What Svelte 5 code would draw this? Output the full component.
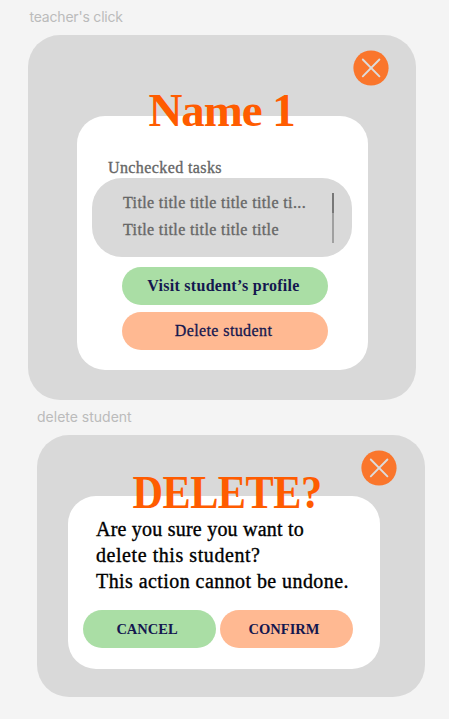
<script>
  const tasks = [
    'Title title title title title ti...',
    'Title title title title title'
  ];
</script>

{#snippet closeButton()}
  <button class="close" aria-label="Close">
    <svg viewBox="0 0 36 36" width="36" height="36">
      <circle cx="18" cy="18" r="17.6" fill="#fa762c" />
      <path d="M9.8 9.5 26.4 26.3M26.4 9.5 9.8 26.3" stroke="#dcdcdc" stroke-width="1.9" stroke-linecap="round" />
    </svg>
  </button>
{/snippet}

<main>
  <div class="label first">teacher's click</div>
  <section class="card profile">
    {@render closeButton()}
    <h1>Name 1</h1>
    <div class="panel">
      <div class="caption">Unchecked tasks</div>
      <div class="tasks">
        <div class="list">
          {#each tasks as task}
            <div class="task">{task}</div>
          {/each}
        </div>
        <div class="track"><div class="thumb"></div></div>
      </div>
      <div class="stack">
        <button class="pill green visit">Visit student’s profile</button>
        <button class="pill peach remove">Delete student</button>
      </div>
    </div>
  </section>

  <div class="label second">delete student</div>
  <section class="card confirm">
    {@render closeButton()}
    <h1>DELETE?</h1>
    <div class="panel">
      <div class="message">
        <div class="l1">Are you sure you want to</div>
        <div class="l2">delete this student?</div>
        <div class="l3">This action cannot be undone.</div>
      </div>
      <div class="row">
        <button class="pill green caps">CANCEL</button>
        <button class="pill peach caps">CONFIRM</button>
      </div>
    </div>
  </section>
</main>

<style>
  :global(body) { background: #f4f4f4; }
  main {
    box-sizing: border-box;
    width: 449px;
    height: 719px;
    overflow: hidden;
    background: #f4f4f4;
    font-family: "Liberation Serif", serif;
    white-space: nowrap;
  }
  .label {
    box-sizing: border-box;
    font: 14px/20px Inter, sans-serif;
    color: #bbb;
  }
  .first { height: 35.4px; padding: 7px 0 0 29.5px; letter-spacing: -0.2px; }
  .second { height: 35px; padding: 7px 0 0 37px; }
  .card {
    position: relative;
    box-sizing: border-box;
    width: 388px;
    background: #d9d9d9;
    border-radius: 32px;
  }
  .profile { margin-left: 28px; height: 365px; padding: 81px 48px 0 49px; }
  .confirm { margin-left: 37px; height: 261.5px; padding: 61px 45px 0 31px; }
  .close {
    position: absolute;
    top: 14.5px;
    right: 27.5px;
    width: 36px;
    height: 36px;
    padding: 0;
    border: 0;
    background: none;
  }
  .confirm .close { right: 28.4px; }
  .close svg { display: block; fill: none; }
  h1 {
    position: absolute;
    left: 0;
    width: 100%;
    margin: 0;
    text-align: center;
    font-size: 47px;
    line-height: 54px;
    color: #ff5c00;
  }
  .profile h1 { top: 48px; left: -0.5px; letter-spacing: -1.1px; }
  .confirm h1 { top: 30px; left: -4px; letter-spacing: -0.6px; transform: scaleX(0.9); }
  .panel { background: #fff; border-radius: 28px; box-sizing: border-box; }
  .profile .panel { height: 253.5px; padding: 42px 16px 0 15px; }
  .confirm .panel { height: 173px; padding: 19.5px 15px 0; }
  .caption {
    height: 20px;
    padding-left: 16px;
    font-size: 16px;
    line-height: 20px;
    letter-spacing: 0.4px;
    color: #666;
    -webkit-text-stroke: 0.35px #666;
  }
  .tasks {
    display: flex;
    justify-content: space-between;
    box-sizing: border-box;
    height: 78.5px;
    padding: 10.5px 18px 0 31px;
    background: #d9d9d9;
    border-radius: 30px;
  }
  .task {
    height: 27px;
    font-size: 16px;
    line-height: 27px;
    letter-spacing: 0.37px;
    color: #666;
    -webkit-text-stroke: 0.35px #666;
  }
  .track { width: 2px; height: 50px; margin-top: 4.5px; background: #a0a0a0; }
  .thumb { height: 20px; background: #777; }
  .stack {
    display: flex;
    flex-direction: column;
    gap: 6.5px;
    margin: 10px 24px 0 30px;
  }
  .pill {
    height: 38.5px;
    padding: 0 3px 0 0;
    border: 0;
    border-radius: 20px;
    font: 16px/38px "Liberation Serif", serif;
    color: #14174f;
  }
  .green { background: #aadea5; }
  .peach { background: #ffb992; }
  .visit { font-weight: 700; letter-spacing: 0.27px; }
  .remove { letter-spacing: 0.4px; -webkit-text-stroke: 0.3px #14174f; }
  .message {
    padding-left: 13px;
    font-size: 20px;
    line-height: 26px;
    color: #000;
    -webkit-text-stroke: 0.35px #000;
  }
  .l1 { letter-spacing: 0.22px; }
  .l2 { letter-spacing: 0.56px; }
  .l3 { letter-spacing: 0.43px; }
  .row { display: flex; gap: 4px; margin-top: 16px; }
  .caps { width: 133px; padding-right: 5px; font-size: 14.5px; font-weight: 700; }
</style>
